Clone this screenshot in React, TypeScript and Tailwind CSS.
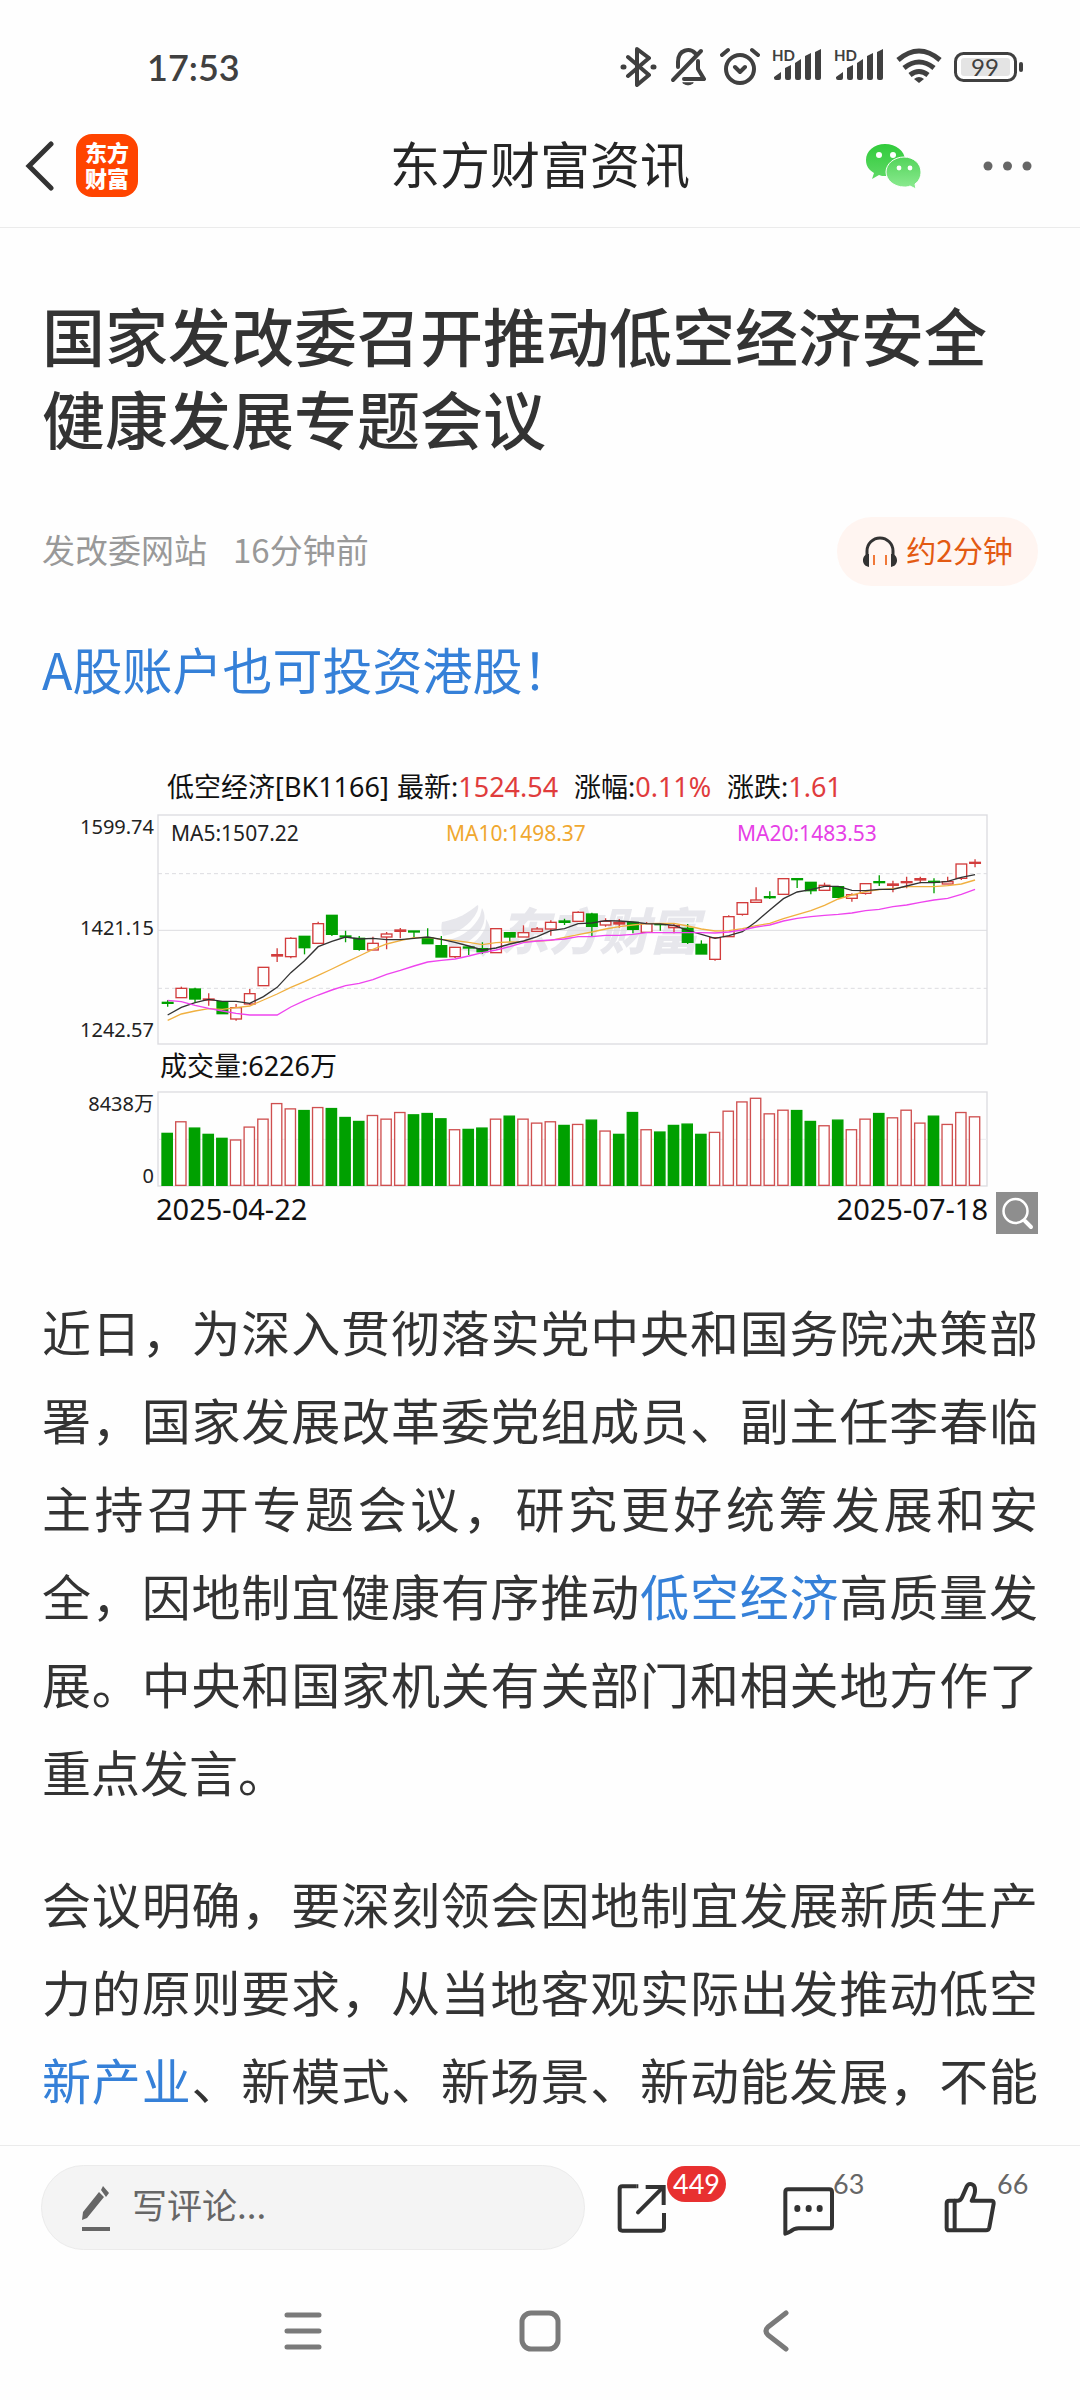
import type { ReactNode } from 'react';

type Dir = 'up' | 'down';
// direction, body top, body bottom, wick top, wick bottom
type Candle = [Dir, number, number, number, number];

const CANDLES: Candle[] = [
  ['down', 757, 760, 750, 770], ['up', 715, 743, 710, 743], ['down', 717, 747, 713, 757], ['up', 747, 750, 730, 767],
  ['down', 755, 791, 755, 791], ['up', 773, 807, 762, 812], ['up', 731, 762, 717, 765], ['up', 652, 707, 652, 707],
  ['up', 614, 618, 595, 636], ['up', 565, 620, 562, 625], ['down', 559, 593, 559, 613], ['up', 521, 580, 515, 580],
  ['down', 496, 553, 496, 558], ['down', 558, 561, 542, 577], ['down', 565, 598, 558, 602], ['up', 580, 600, 560, 600],
  ['up', 552, 561, 546, 598], ['up', 540, 544, 534, 565], ['down', 543, 546, 543, 565], ['down', 564, 581, 535, 581],
  ['down', 587, 621, 558, 621], ['up', 592, 620, 592, 624], ['down', 591, 594, 591, 615], ['down', 596, 605, 577, 612],
  ['up', 536, 608, 536, 608], ['down', 548, 561, 548, 575], ['up', 548, 561, 526, 561], ['up', 537, 544, 531, 544],
  ['up', 517, 537, 511, 557], ['down', 513, 517, 506, 525], ['up', 487, 514, 484, 514], ['down', 492, 529, 488, 560],
  ['up', 514, 525, 505, 530], ['up', 517, 522, 507, 533], ['down', 517, 538, 517, 550], ['up', 521, 547, 516, 547],
  ['down', 521, 524, 521, 542], ['up', 527, 533, 522, 550], ['down', 535, 577, 522, 582], ['down', 583, 612, 571, 612],
  ['up', 563, 628, 563, 632], ['up', 500, 560, 496, 560], ['up', 458, 493, 458, 497], ['up', 450, 457, 412, 457],
  ['down', 440, 443, 424, 447], ['up', 386, 433, 386, 433], ['down', 386, 389, 386, 414], ['down', 397, 422, 397, 433],
  ['up', 406, 421, 398, 421], ['down', 410, 442, 410, 442], ['up', 434, 445, 430, 455], ['up', 401, 430, 401, 434],
  ['down', 395, 398, 376, 408], ['up', 402, 406, 392, 427], ['up', 395, 398, 380, 415], ['up', 386, 390, 380, 400],
  ['down', 394, 397, 385, 430], ['up', 395, 402, 380, 402], ['up', 342, 385, 342, 390], ['up', 337, 340, 328, 352],
];

const MA5 = [
  795, 772, 758, 748, 754, 754, 760, 740, 712, 668, 632, 590, 574, 561, 567, 565, 569, 569, 565, 561,
  568, 577, 588, 600, 594, 582, 573, 560, 542, 536, 521, 519, 512, 513, 516, 521, 522, 526, 541, 553,
  565, 557, 545, 515, 480, 446, 426, 419, 409, 409, 421, 422, 418, 418, 408, 398, 398, 394, 382, 374,
];
const MA10 = [
  811, 792, 783, 776, 778, 773, 768, 750, 732, 712, 695, 676, 657, 637, 618, 598, 582, 572, 563, 562,
  568, 572, 577, 584, 578, 576, 575, 573, 571, 562, 554, 546, 537, 530, 525, 521, 520, 520, 528, 537,
  543, 542, 536, 527, 520, 506, 494, 482, 466, 447, 435, 425, 419, 416, 410, 410, 410, 407, 402, 390,
];
const MA20 = [
  751, 755, 766, 775, 783, 790, 795, 795, 795, 771, 752, 735, 720, 707, 700, 689, 673, 661, 648, 636,
  631, 627, 618, 608, 600, 590, 578, 573, 570, 567, 560, 560, 556, 556, 553, 548, 548, 548, 548, 548,
  549, 546, 540, 531, 525, 513, 505, 500, 496, 493, 489, 482, 478, 470, 465, 457, 450, 445, 433, 418,
];

const VOLUME_TOPS = [
  280, 245, 264, 283, 295, 300, 261, 237, 190, 206, 211, 202, 205, 232, 244, 226, 237, 217, 224, 220,
  236, 269, 268, 264, 237, 228, 237, 249, 245, 256, 253, 240, 273, 283, 217, 269, 276, 256, 252, 283,
  277, 213, 185, 174, 221, 210, 211, 244, 257, 240, 269, 237, 220, 233, 210, 249, 228, 253, 217, 230,
];
const VOLUME_GREEN = new Set([0, 2, 3, 4, 10, 12, 13, 14, 18, 19, 20, 22, 23, 25, 29, 31, 33, 34, 36, 37, 38, 39, 46, 47, 49, 52, 56]);

const GREEN = '#00a000';
const RED = '#d23c3c';
const candleX = (i: number) => 323 + i * 41.07;
const linePoints = (values: number[]) => values.map((y, i) => `${candleX(i)},${y}`).join(' ');

function StockChart() {
  return (
    <svg
      viewBox="0 0 996 484"
      className="block w-full font-['Noto_Sans','Noto_Sans_CJK_SC',sans-serif]"
      role="img"
      aria-label="低空经济[BK1166] 日K线"
    >
      {/* Quote line */}
      <g className="text-[27px]" fill="#111">
        <text x="125" y="47">低空经济[BK1166]</text>
        <text x="355" y="47">最新:<tspan fill="#e03c3c">1524.54</tspan></text>
        <text x="532" y="47">涨幅:<tspan fill="#e03c3c">0.11%</tspan></text>
        <text x="685" y="47">涨跌:<tspan fill="#e03c3c">1.61</tspan></text>
        <text x="118" y="326">成交量:6226万</text>
      </g>

      {/* Watermark */}
      <g fill="#e7e7ec">
        <path d="M400 172c10-2 19-5 26-10 5-3 8-6 10-7 1 3-1 8-4 12-9 12-20 17-31 19-2-5-2-10-1-14zM406 190c16-3 27-14 32-24l2-8c4 6 3 15-1 21-7 11-19 17-30 18-3-2-3-4-3-7zM416 200c12-4 22-10 27-22 1-3 1-7 1-9 5 8 7 18 3 28-2 5-4 8-6 10-2-3-5-4-8-5-6-1-11-2-17-2z" />
        <text x="457" y="200" className="text-[50px] font-black italic">东方财富</text>
      </g>

      {/* Price plot */}
      <svg x="116" y="65" width="829" height="229" viewBox="294 195 2488 687" preserveAspectRatio="none" overflow="visible">
        <rect x="294" y="195" width="2488" height="687" fill="none" stroke="#dcdce0" strokeWidth="4" />
        <path d="M294 541H2782" stroke="#dcdce0" strokeWidth="3" />
        <path d="M294 371H2782M294 715H2782" stroke="#dcdce0" strokeWidth="3" strokeDasharray="12 9" />
        {CANDLES.map(([dir, top, bottom, high, low], i) => {
          const x = candleX(i);
          const color = dir === 'up' ? RED : GREEN;
          const hollow = dir === 'up' && bottom - top > 5;
          return (
            <g key={i} stroke={color} strokeWidth="4">
              <path d={`M${x} ${high}V${top}M${x} ${bottom}V${low}`} />
              <rect x={x - 16} y={top} width="32" height={bottom - top} fill={hollow ? '#fff' : color} />
            </g>
          );
        })}
        <g fill="none" strokeWidth="4">
          <polyline points={linePoints(MA10)} stroke="#f0b040" />
          <polyline points={linePoints(MA5)} stroke="#333" />
          <polyline points={linePoints(MA20)} stroke="#ee44ee" />
        </g>
      </svg>

      {/* Volume plot */}
      <svg x="116" y="342" width="829" height="94" viewBox="294 155 2488 284" preserveAspectRatio="none" overflow="visible">
        <rect x="294" y="155" width="2488" height="284" fill="none" stroke="#dcdce0" strokeWidth="4" />
        <path d="M294 298H2782" stroke="#ececf0" strokeWidth="3" />
        {VOLUME_TOPS.map((top, i) => {
          const green = VOLUME_GREEN.has(i);
          return (
            <rect
              key={i}
              x={candleX(i) - 17}
              y={top}
              width="31"
              height={437 - top}
              fill={green ? GREEN : '#fff'}
              stroke={green ? GREEN : '#cf5050'}
              strokeWidth="4"
            />
          );
        })}
      </svg>

      {/* Axis labels */}
      <g className="text-[20px]" fill="#222">
        <g textAnchor="end">
          <text x="112" y="84">1599.74</text>
          <text x="112" y="185">1421.15</text>
          <text x="112" y="287">1242.57</text>
          <text x="112" y="361">8438万</text>
          <text x="112" y="433">0</text>
        </g>
      </g>
      <g className="text-[21px]">
        <text x="129" y="91" fill="#222">MA5:1507.22</text>
        <text x="404" y="91" fill="#f0a830">MA10:1498.37</text>
        <text x="695" y="91" fill="#e640e6">MA20:1483.53</text>
      </g>
      <g className="text-[29px]" fill="#111">
        <text x="114" y="470">2025-04-22</text>
        <text x="946" y="470" textAnchor="end">2025-07-18</text>
      </g>
    </svg>
  );
}

function SignalIcon() {
  return (
    <svg viewBox="0 0 50 40" className="h-10 w-[50px] overflow-visible" fill="#404040">
      <text x="0" y="14" className="font-['Lato',sans-serif] text-[15px] font-bold">HD</text>
      <path d="M2 33v-3l7-5v6q0 2-2 2H4q-2 0-2-2zM13 21l6-3v13q0 2-2 2h-2q-2 0-2-2zM23 16l6-4v19q0 2-2 2h-2q-2 0-2-2zM33 9l6-3v25q0 2-2 2h-2q-2 0-2-2zM43 5l6-3v29q0 2-2 2h-2q-2 0-2-2z" />
    </svg>
  );
}

function StatusBar() {
  return (
    <div className="flex h-[104px] items-center justify-between pt-[30px] pr-[57px] pl-[147px]">
      <time className="font-['Lato',sans-serif] text-[36px] font-semibold text-[#404040]">17:53</time>
      <div className="flex items-center gap-3">
        <svg viewBox="0 0 38 40" className="h-10 w-[38px]" fill="none" stroke="#404040" strokeWidth="4" strokeLinecap="round" strokeLinejoin="round">
          <path d="M8 10l21 18-12 10V2l12 9L8 29" />
          <path d="M3 20h1M33 20h1" strokeWidth="5" />
        </svg>
        <svg viewBox="0 0 38 40" className="h-10 w-[38px]" fill="none" stroke="#404040" strokeWidth="4" strokeLinecap="round" strokeLinejoin="round">
          <path d="M8 20v-5C8 2 20 1 25 6M28 14v8l6 10H14" />
          <path d="M3 33L31 4" />
          <path d="M13 36q5 4 10 0z" fill="#404040" strokeWidth="1" />
        </svg>
        <svg viewBox="0 0 40 40" className="h-10 w-10" fill="none" stroke="#404040" strokeWidth="4" strokeLinecap="round" strokeLinejoin="round">
          <circle cx="20" cy="22" r="14" />
          <path d="M15 20l5 5 5-5M2 8l6-5M38 8l-6-5" />
        </svg>
        <SignalIcon />
        <SignalIcon />
        <svg viewBox="0 0 46 40" className="h-10 w-[46px]" fill="none" stroke="#404040" strokeWidth="5">
          <path d="M2 13Q23-5 44 13M8 21q15-12 30 0M14 28q9-7 18 0" />
          <path d="M23 36l-5-4q5-4 10 0z" fill="#404040" stroke="none" />
        </svg>
        <svg viewBox="0 0 69 40" className="h-10 w-[69px]">
          <rect x="1.5" y="6.5" width="60" height="27" rx="8" fill="#fff" stroke="#404040" strokeWidth="3" />
          <rect x="7" y="11" width="49" height="18" rx="3" fill="#e4e4e4" />
          <rect x="65" y="15" width="4" height="10" rx="2" fill="#404040" />
          <text x="31" y="29" textAnchor="middle" fill="#404040" className="font-['Lato',sans-serif] text-[24px]">99</text>
        </svg>
      </div>
    </div>
  );
}

function Header() {
  return (
    <header className="grid h-[124px] grid-cols-[1fr_auto_1fr] items-center border-b border-[#ebebeb] px-[25px]">
      <div className="flex items-center gap-[22px]">
        <button type="button" aria-label="返回">
          <svg viewBox="0 0 29 50" className="block h-[50px] w-[29px]" fill="none" stroke="#333" strokeWidth="5" strokeLinecap="round">
            <path d="M26 3L4 25l22 22" />
          </svg>
        </button>
        <div className="flex h-[63px] w-[62px] flex-col items-center justify-center rounded-2xl bg-[#ff4400] pb-1 text-[22px] leading-[26px] font-black text-white">
          <span>东方</span>
          <span>财富</span>
        </div>
      </div>
      <h1 className="pb-2 text-[50px] leading-[60px] text-[#262626]">东方财富资讯</h1>
      <div className="flex items-center justify-end gap-[61px] pr-[23px]">
        <button type="button" aria-label="微信">
          <svg viewBox="0 0 57 46" className="block h-[46px] w-[57px]">
            <defs>
              <linearGradient id="wxBack" x1="0" y1="0" x2="0" y2="1">
                <stop offset="0" stopColor="#31cb3b" />
                <stop offset="1" stopColor="#5fd966" />
              </linearGradient>
              <linearGradient id="wxFront" x1="0" y1="0" x2="0" y2="1">
                <stop offset="0" stopColor="#53d45a" />
                <stop offset="1" stopColor="#8deb92" />
              </linearGradient>
            </defs>
            <path d="M20 1C9 1 1 8 1 17c0 6 3 10 8 13l-2 6 7-4c2 1 4 1 6 1 11 0 20-7 20-16S31 1 20 1z" fill="url(#wxBack)" />
            <circle cx="14" cy="12" r="3" fill="#fff" />
            <circle cx="28" cy="12" r="3" fill="#fff" />
            <path d="M39 14c-10 0-18 7-18 15s8 15 18 15c2 0 4 0 6-1l6 3-1-5c4-3 6-7 6-12 0-8-7-15-17-15z" fill="url(#wxFront)" stroke="#fff" strokeWidth="1" />
            <circle cx="34" cy="25" r="2.4" fill="#fff" />
            <circle cx="45" cy="25" r="2.4" fill="#fff" />
          </svg>
        </button>
        <button type="button" aria-label="更多">
          <svg viewBox="0 0 49 10" className="block h-[10px] w-[49px]" fill="#666">
            <circle cx="5" cy="5" r="4.5" />
            <circle cx="24.5" cy="5" r="4.5" />
            <circle cx="44" cy="5" r="4.5" />
          </svg>
        </button>
      </div>
    </header>
  );
}

function Article() {
  return (
    <article className="flex-1 px-[42px] pt-[64px] pb-[18px]">
      <h2 className="text-[63px] leading-[83px] font-medium text-[#333]">国家发改委召开推动低空经济安全健康发展专题会议</h2>

      <div className="mt-[59px] flex items-center justify-between text-[33px] text-[#999]">
        <div className="flex gap-[26px] pb-1">
          <span>发改委网站</span>
          <span>16分钟前</span>
        </div>
        <button type="button" className="flex h-[69px] items-center gap-2 rounded-full bg-[#fff5f1] px-[25px] text-[30px] text-[#e35a12]">
          <svg viewBox="0 0 36 32" className="h-8 w-9" fill="none">
            <path d="M5 20v-5a13 13 0 0 1 26 0v5" stroke="#333" strokeWidth="3" />
            <path d="M7 18C0 17-2 30 7 31zM29 18c7-1 9 12 0 13z" fill="#333" />
            <path d="M12 19v10M24 19v10" stroke="#f07838" strokeWidth="2" />
          </svg>
          <span className="pb-1">约2分钟</span>
        </button>
      </div>

      <a href="#hk" className="mt-[45px] block text-[50px] leading-[75px] text-[#3580d8]">A股账户也可投资港股！</a>

      <figure className="relative mt-[44px]">
        <StockChart />
        <button type="button" aria-label="放大" className="absolute right-0 bottom-0 flex h-[42px] w-[42px] items-center justify-center bg-[#8e8e8e]">
          <svg viewBox="0 0 42 42" className="h-full w-full" fill="none" stroke="#fff" strokeLinecap="round">
            <circle cx="19.500" cy="19" r="12" strokeWidth="2.500" />
            <path d="M29 29l6 6" strokeWidth="4" />
          </svg>
        </button>
      </figure>

      <div className="mt-[53px] flex flex-col gap-11 text-justify text-[49px] leading-[88px] text-[#333]">
        <p>
          近日，为深入贯彻落实党中央和国务院决策部署，国家发展改革委党组成员、副主任李春临主持召开专题会议，研究更好统筹发展和安全，因地制宜健康有序推动
          <a href="#bk1166" className="text-[#3580d8]">低空经济</a>
          高质量发展。中央和国家机关有关部门和相关地方作了重点发言。
        </p>
        <p className="[text-align-last:justify]">
          会议明确，要深刻领会因地制宜发展新质生产力的原则要求，从当地客观实际出发推动低空
          <a href="#new" className="text-[#3580d8]">新产业</a>
          、新模式、新场景、新动能发展，不能
        </p>
      </div>
    </article>
  );
}

interface ActionProps {
  label: string;
  viewBox: string;
  count: number;
  highlight?: boolean;
  children: ReactNode;
}

function Action({ label, viewBox, count, highlight = false, children }: ActionProps) {
  return (
    <button type="button" aria-label={label} className="relative">
      <svg viewBox={viewBox} className="block h-[50px] w-[50px] overflow-visible" fill="none" stroke="#333" strokeWidth="12" strokeLinecap="round" strokeLinejoin="round">
        {children}
      </svg>
      <span
        className={`absolute -top-[17px] left-full h-[36px] rounded-full font-['Lato',sans-serif] text-[27px] leading-[36px] ${
          highlight ? 'bg-[#e83030] px-1.5 text-white' : 'px-0.5 text-[#666]'
        }`}
      >
        {count}
      </span>
    </button>
  );
}

function BottomBar() {
  return (
    <footer>
      <div className="flex items-center border-t border-[#ebebeb] pt-[19px] pr-[85px] pb-[12px] pl-[41px]">
        <label className="flex h-[85px] min-w-0 flex-1 items-center gap-[21px] rounded-full border border-[#ebebeb] bg-[#f4f4f4] pl-[39px]">
          <svg viewBox="0 0 30 46" className="h-[46px] w-[30px] shrink-0" fill="#666">
            <path d="M18 7l5 5L6 33l-5 2 1-8zM22 1l6 7-3 4-5-7zM1 42h28v4H1z" />
          </svg>
          <input type="text" aria-label="写评论" placeholder="写评论..." className="w-full min-w-0 bg-transparent pb-1.5 text-[35px] outline-none placeholder:text-[#666]" />
        </label>
        <div className="ml-8 flex shrink-0 gap-[114px]">
          <Action label="分享" viewBox="170 156 150 150" count={449} highlight>
            <path d="M228 166h-42q-8 0-8 8v117q0 8 8 8h117q8 0 8-8v-39" strokeLinecap="butt" />
            <path d="M234 166h-6M311 246v6" strokeLinecap="butt" />
            <path d="M233 244l74-74" />
            <path d="M256 168h54v54" strokeLinecap="butt" strokeLinejoin="miter" />
          </Action>
          <Action label="评论" viewBox="666 156 150 150" count={63}>
            <path d="M687 175h124q8 0 8 8v101q0 8-8 8h-92q-14 0-26 10-6 4-14 6V183q0-8 8-8z" />
            <path d="M715 231v3M749 231v3M782 231v3" strokeWidth="18" />
          </Action>
          <Action label="点赞" viewBox="1159 156 150 150" count={66}>
            <path d="M1172 209h26q8-1 12-10l14-32c6-13 24-10 25 8 1 12-3 22-10 34h58q9 0 8 9l-13 71q-2 9-10 9h-110q-8 0-8-8v-73q0-8 8-8z" />
            <path d="M1188 209v88" />
          </Action>
        </div>
      </div>
      <nav className="grid h-[138px] grid-cols-3 items-center justify-items-center px-[184px]">
        <button type="button" aria-label="最近任务">
          <svg viewBox="0 0 40 40" className="block h-10 w-10" stroke="#7a7a7a" strokeWidth="5" strokeLinecap="round">
            <path d="M4 4h32M4 20h32M4 36h32" />
          </svg>
        </button>
        <button type="button" aria-label="主屏幕">
          <svg viewBox="0 0 42 42" className="block h-[42px] w-[42px]" fill="none" stroke="#7a7a7a" strokeWidth="5">
            <rect x="3" y="3" width="36" height="36" rx="9" />
          </svg>
        </button>
        <button type="button" aria-label="后退">
          <svg viewBox="0 0 28 42" className="block h-[42px] w-[28px]" fill="none" stroke="#7a7a7a" strokeWidth="5" strokeLinecap="round" strokeLinejoin="round">
            <path d="M23 3L5 17q-4 4 0 8l18 14" />
          </svg>
        </button>
      </nav>
    </footer>
  );
}

export default function App() {
  return (
    <div className="flex min-h-screen flex-col bg-[#fefefe] font-['Noto_Sans_CJK_SC',sans-serif]">
      <StatusBar />
      <Header />
      <Article />
      <BottomBar />
    </div>
  );
}
